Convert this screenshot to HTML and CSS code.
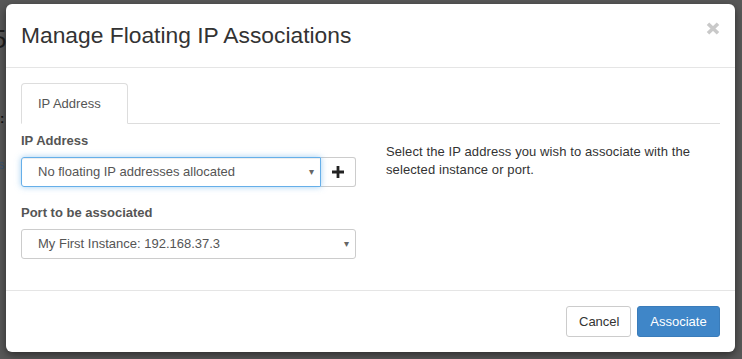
FILE: index.html
```html
<!DOCTYPE html>
<html>
<head>
<meta charset="utf-8">
<link rel="stylesheet" href="styles.css">
</head>
<body>
<div class="backdrop-page">
  <span class="bg-num">5</span>
  <span class="bg-colon">:</span>
  <span class="bg-link">s</span>
</div>
<div class="modal">
  <div class="modal-header">
    <h3 class="modal-title">Manage Floating IP Associations</h3>
    <span class="close" aria-label="Close">
      <svg width="14" height="13" viewBox="0 0 14 13"><path d="M2 1.8L12 11.2M12 1.8L2 11.2" stroke="#c9c9c9" stroke-width="3.6" stroke-linecap="butt"/></svg>
    </span>
  </div>
  <div class="modal-body">
    <ul class="tabs">
      <li class="tab active">IP Address</li>
    </ul>
    <div class="row">
      <div class="col left">
        <div class="form-group">
          <label class="label">IP Address</label>
          <div class="input-group">
            <div class="select focused">
              <span>No floating IP addresses allocated</span>
              <span class="caret">&#9662;</span>
            </div>
            <div class="addon">
              <svg width="12" height="12" viewBox="0 0 12 12"><path d="M4.6 0h2.8v4.6H12v2.8H7.4V12H4.6V7.4H0V4.6h4.6z" fill="#222"/></svg>
            </div>
          </div>
        </div>
        <div class="form-group">
          <label class="label">Port to be associated</label>
          <div class="select">
            <span>My First Instance: 192.168.37.3</span>
            <span class="caret">&#9662;</span>
          </div>
        </div>
      </div>
      <div class="col right">
        <p class="help">Select the IP address you wish to associate with the selected instance or port.</p>
      </div>
    </div>
  </div>
  <div class="modal-footer">
    <button class="btn btn-default">Cancel</button>
    <button class="btn btn-primary">Associate</button>
  </div>
</div>
</body>
</html>
```

FILE: styles.css
```css
* { box-sizing: border-box; }
html, body {
  margin: 0;
  padding: 0;
}
body {
  background: #585858;
  font-family: "Liberation Sans", Arial, Helvetica, sans-serif;
  font-size: 13px;
  line-height: 18px;
  color: #333;
  width: 742px;
  height: 359px;
  overflow: hidden;
  position: relative;
}
.backdrop-page {
  position: absolute;
  left: 0;
  top: 0;
  width: 20px;
  height: 359px;
}
.bg-num {
  position: absolute;
  left: -8px;
  top: 30px;
  font-size: 26px;
  color: #1e1e1e;
}
.bg-colon {
  position: absolute;
  left: 0;
  top: 110px;
  font-weight: bold;
  color: #111;
}
.bg-link {
  position: absolute;
  left: -2px;
  top: 156px;
  color: #3a5573;
}
.modal {
  position: relative;
  margin: 4px 0 0 6px;
  width: 729px;
  background: #fff;
  border-radius: 6px;
  box-shadow: 0 3px 9px rgba(0,0,0,0.5);
  display: flex;
  flex-direction: column;
}
.modal-header {
  padding: 15px;
  border-bottom: 1px solid #e5e5e5;
  display: flex;
  justify-content: space-between;
  align-items: flex-start;
  height: 64px;
}
.modal-title {
  margin: 0;
  font-size: 22.8px;
  font-weight: normal;
  line-height: 32px;
  color: #333;
}
.close {
  display: flex;
  margin-top: 3px;
}
.modal-body {
  padding: 15px;
  height: 222px;
}
.tabs {
  list-style: none;
  margin: 0;
  padding: 0;
  border-bottom: 1px solid #ddd;
  display: flex;
}
.tab {
  padding: 11px 16px 10px 16px;
  border: 1px solid #ddd;
  border-bottom-color: transparent;
  border-radius: 4px 4px 0 0;
  margin-bottom: -1px;
  background: #fff;
  color: #555;
  line-height: 18px;
  width: 107px;
  height: 41px;
}
.row {
  display: flex;
  gap: 30px;
  margin-top: 8px;
}
.col {
  flex: 0 0 335px;
}
.form-group {
  margin-bottom: 17px;
}
.label {
  display: block;
  font-weight: bold;
  color: #555;
  margin-bottom: 7px;
  line-height: 18px;
}
.input-group {
  display: flex;
}
.select {
  height: 30px;
  border: 1px solid #ccc;
  border-radius: 3px;
  padding: 0 6px 0 16px;
  display: flex;
  align-items: center;
  justify-content: space-between;
  color: #555;
  flex: 1;
}
.select.focused {
  border-color: #66afe9;
  box-shadow: inset 0 1px 1px rgba(0,0,0,0.075), 0 0 6px rgba(102,175,233,0.6);
  border-radius: 3px 0 0 3px;
  position: relative;
  z-index: 1;
}
.caret {
  font-size: 10px;
  color: #666;
}
.addon {
  width: 35px;
  height: 30px;
  border: 1px solid #ccc;
  border-left: none;
  border-radius: 0 3px 3px 0;
  display: flex;
  align-items: center;
  justify-content: center;
}
.help {
  margin: 11px 0 0 0;
  color: #333;
  letter-spacing: 0.1px;
}
.modal-footer {
  border-top: 1px solid #e5e5e5;
  padding: 15px;
  display: flex;
  justify-content: flex-end;
  gap: 6px;
}
.btn {
  font-family: inherit;
  font-size: 13px;
  height: 31px;
  padding: 0 12px;
  border-radius: 3px;
  border: 1px solid #ccc;
  background: #fff;
  color: #333;
}
.btn-default {
  width: 65px;
}
.btn-primary {
  width: 83px;
  background: #3f86c8;
  border-color: #3a7cba;
  color: #fff;
}
```
